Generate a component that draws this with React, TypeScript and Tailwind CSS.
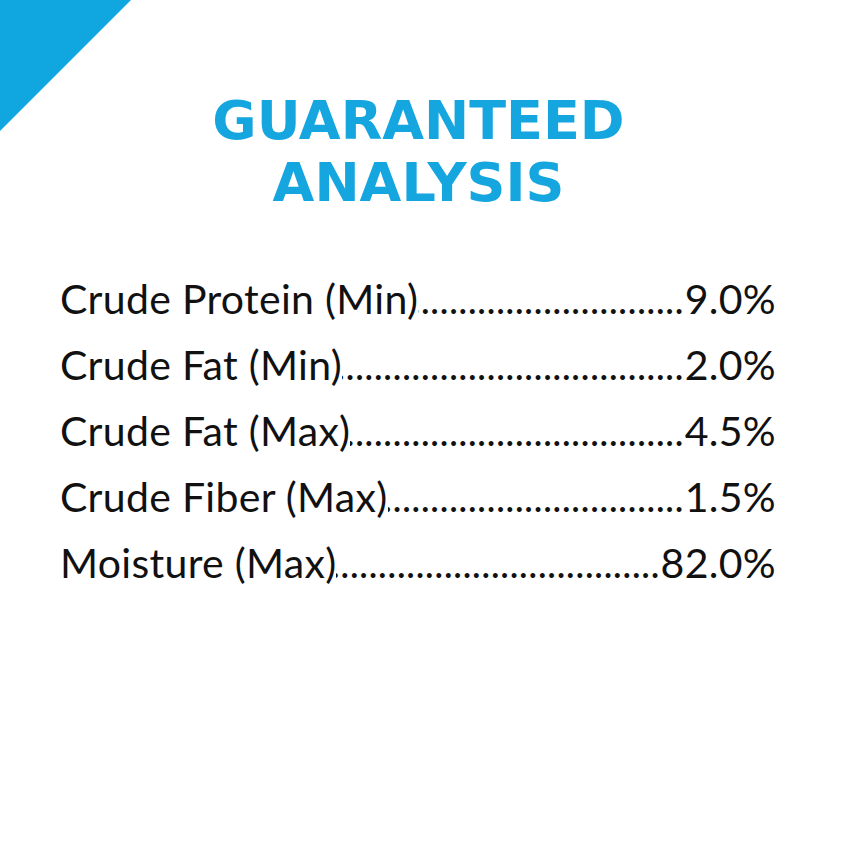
import React from "react";

const rows = [
  { label: "Crude Protein (Min)", value: "9.0%" },
  { label: "Crude Fat (Min)", value: "2.0%" },
  { label: "Crude Fat (Max)", value: "4.5%" },
  { label: "Crude Fiber (Max)", value: "1.5%" },
  { label: "Moisture (Max)", value: "82.0%" },
];

const dots = ".".repeat(140);

export default function App() {
  return (
    <div className="relative w-[841px] h-[841px] bg-white overflow-hidden">
      <svg className="absolute left-0 top-0" width="132" height="132" viewBox="0 0 132 132">
        <polygon points="0,0 131,0 0,131" fill="#10a6e0" />
      </svg>
      <div className="flex flex-col pt-[90px]">
        <h1
          className="text-center text-[#15a6e0] font-bold text-[54px] leading-[62px] pr-[4px]"
          style={{ fontFamily: '"DejaVu Sans", sans-serif' }}
        >
          <div>GUARANTEED</div>
          <div>ANALYSIS</div>
        </h1>
        <div
          className="flex flex-col mt-[52px] ml-[60px] w-[716px] text-[#111111] text-[41px] leading-[66px] tracking-[0.3px]"
          style={{ fontFamily: 'Lato, sans-serif' }}
        >
          {rows.map((r) => (
            <div key={r.label} className="flex items-baseline whitespace-nowrap h-[66px]">
              <span>{r.label}</span>
              <span className="flex-1 flex justify-end overflow-hidden min-w-0 pl-[1px]">
                <span className="text-[32px] leading-none tracking-[1.8px] font-bold">{dots}</span>
              </span>
              <span>{r.value}</span>
            </div>
          ))}
        </div>
      </div>
    </div>
  );
}
